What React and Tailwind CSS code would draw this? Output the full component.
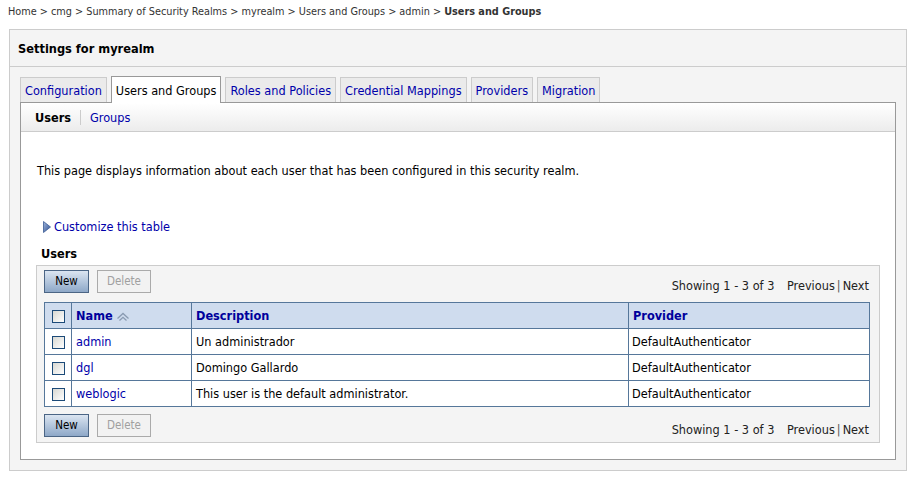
const Checkbox = () => (
  <span className="inline-block w-[13px] h-[13px] border border-[#1c4a78] bg-gradient-to-br from-[#d8d8d2] to-white align-middle" />
);

const SortIcon = () => (
  <svg width="14" height="10" viewBox="0 0 14 10" className="inline-block ml-[3px] align-middle">
    <polyline points="1.5,6.5 7,1.5 12.5,6.5" fill="none" stroke="#8a9bb2" strokeWidth="1.3" />
    <polyline points="3.5,8.5 7,5.3 10.5,8.5" fill="none" stroke="#8a9bb2" strokeWidth="1.3" />
  </svg>
);

const Tab = ({ label, active }) =>
  active ? (
    <div className="h-[27px] px-[4px] flex items-center border border-b-0 border-[#999] bg-white text-black relative top-px">
      {label}
    </div>
  ) : (
    <div className="h-[25px] px-[4px] flex items-center border border-b-0 border-[#ccc] bg-[#ebebeb] text-[#0000aa]">
      {label}
    </div>
  );

const ButtonsRow = () => (
  <div className="flex items-end justify-between h-[23px] leading-[15px]">
    <div className="flex gap-[8px]">
      <button className="h-[23px] w-[45px] border border-[#4b6585] bg-gradient-to-b from-[#dbe5f1] to-[#8ea8c8] text-black text-[11.5px]">
        New
      </button>
      <button className="h-[23px] w-[54px] border border-[#aaa] bg-[#f2f2f2] text-[#a0a0a0] text-[11.5px]">
        Delete
      </button>
    </div>
    <div className="pr-[3px] text-[#222]">
      Showing 1 - 3 of 3 <span className="ml-[9px]">Previous</span>
      <span className="mx-[2px] text-[#555]">|</span>Next
    </div>
  </div>
);

const users = [
  { name: "admin", desc: "Un administrador", provider: "DefaultAuthenticator" },
  { name: "dgl", desc: "Domingo Gallardo", provider: "DefaultAuthenticator" },
  { name: "weblogic", desc: "This user is the default administrator.", provider: "DefaultAuthenticator" },
];

export default function App() {
  return (
    <div className="w-[917px] h-[478px] bg-white text-[12.6px] leading-[15px] text-black font-['DejaVu_Sans_Condensed','DejaVu_Sans',sans-serif]">
      <div className="h-[23px] pl-[8px] pt-[4px] text-[10.8px] text-[#333]">
        Home &gt; cmg &gt; Summary of Security Realms &gt; myrealm &gt; Users and Groups &gt; admin &gt;{" "}
        <span className="font-bold">Users and Groups</span>
      </div>

      <div className="mt-[6px] ml-[9px] w-[898px] border border-[#ccc] bg-[#f4f4f4]">
        <div className="h-[37px] pl-[8px] flex items-center text-[12.7px] font-bold border-b border-[#ccc]">
          Settings for myrealm
        </div>

        <div className="px-[10px] pt-[10px] pb-[10px]">
          <div className="flex items-end gap-[4px] h-[25px]">
            <Tab label="Configuration" />
            <Tab label="Users and Groups" active />
            <Tab label="Roles and Policies" />
            <Tab label="Credential Mappings" />
            <Tab label="Providers" />
            <Tab label="Migration" />
          </div>

          <div className="border border-[#999] bg-white h-[358px]">
            <div className="h-[29px] flex items-center pl-[14px] bg-gradient-to-b from-white to-[#ececec] border-b border-[#ccc]">
              <span className="font-bold">Users</span>
              <span className="mx-[9px] h-[15px] border-l border-[#ccc]" />
              <span className="text-[#0000aa]">Groups</span>
            </div>

            <p className="mt-[31px] ml-[16px]">
              This page displays information about each user that has been configured in this security realm.
            </p>

            <div className="mt-[41px] ml-[22px] flex items-center gap-[3px] text-[#0000aa]">
              <svg width="8" height="12" viewBox="0 0 8 12">
                <defs>
                  <linearGradient id="tri" x1="0" y1="0" x2="1" y2="1">
                    <stop offset="0" stopColor="#9fb6dd" />
                    <stop offset="1" stopColor="#2f4f8f" />
                  </linearGradient>
                </defs>
                <polygon points="0.5,0.5 7.5,6 0.5,11.5" fill="url(#tri)" stroke="#3a5a94" strokeWidth="0.8" />
              </svg>
              Customize this table
            </div>

            <div className="mt-[12px] ml-[20px] font-bold">Users</div>

            <div className="mt-[4px] mx-[15px] border border-[#ccc] bg-[#f4f4f4] px-[7px] pt-[4px] pb-[5px]">
              <ButtonsRow />
              <table className="mt-[9px] w-[826px] border-collapse border border-[#56779a] bg-white">
                <thead>
                  <tr className="h-[26px] bg-[#cfdcee] text-[#00009c] font-bold text-left">
                    <th className="w-[27px] border border-[#56779a] text-center">
                      <Checkbox />
                    </th>
                    <th className="w-[120px] border border-[#56779a] pl-[4px]">
                      Name
                      <SortIcon />
                    </th>
                    <th className="w-[437px] border border-[#56779a] pl-[4px]">Description</th>
                    <th className="border border-[#56779a] pl-[4px]">Provider</th>
                  </tr>
                </thead>
                <tbody>
                  {users.map((u) => (
                    <tr key={u.name} className="h-[26px]">
                      <td className="border border-[#56779a] text-center">
                        <Checkbox />
                      </td>
                      <td className="border border-[#56779a] pl-[4px] text-[#0000aa]">{u.name}</td>
                      <td className="border border-[#56779a] pl-[4px]">{u.desc}</td>
                      <td className="border border-[#56779a] pl-[3px]">{u.provider}</td>
                    </tr>
                  ))}
                </tbody>
              </table>
              <div className="mt-[7px]">
                <ButtonsRow />
              </div>
            </div>
          </div>
        </div>
      </div>
    </div>
  );
}
